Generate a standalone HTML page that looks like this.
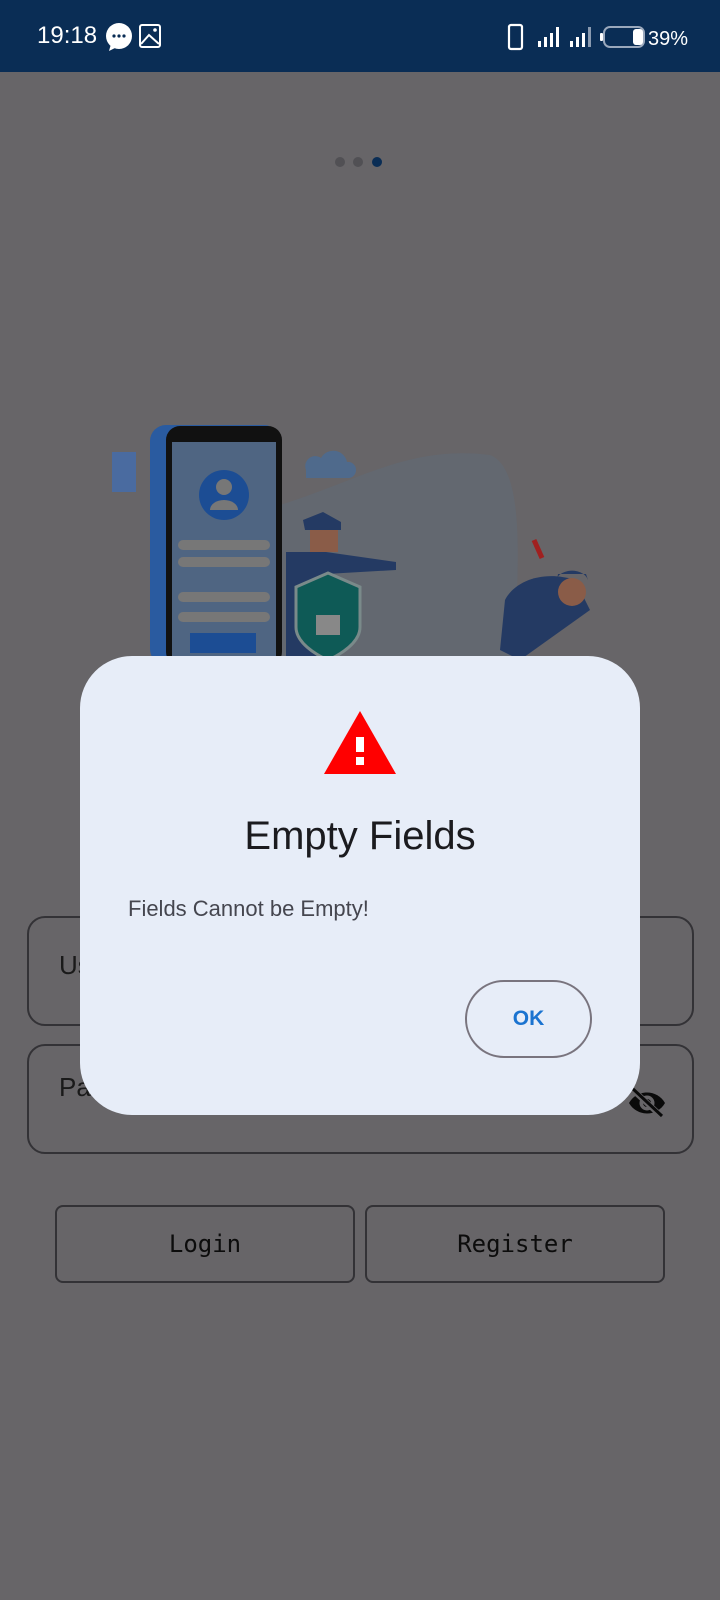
<!DOCTYPE html>
<html><head><meta charset="utf-8">
<style>
*{margin:0;padding:0;box-sizing:border-box}
body{width:720px;height:1600px;background:#676568;position:relative;overflow:hidden;font-family:"Liberation Sans",sans-serif}
.abs{position:absolute}
.sb{left:0;top:0;width:720px;height:72px;background:#0a2d55;color:#fff}
.field{border:2px solid #333236;border-radius:18px;left:27px;width:667px;height:110px}
.btn{border:2px solid #333236;border-radius:8px;height:78px;top:1205px;width:300px;font-family:"DejaVu Sans Mono","Liberation Mono",monospace;font-size:24px;color:#0c0c0c;display:flex;align-items:center;justify-content:center}
.dlg{left:80px;top:656px;width:560px;height:459px;background:#e7edf8;border-radius:52px}
</style></head><body>
<div class="abs sb">
  <div class="abs" style="left:37px;top:22px;font-size:24px;">19:18</div>
  <svg class="abs" style="left:105px;top:22px" width="58" height="30" viewBox="0 0 58 30">
    <circle cx="14" cy="14" r="13" fill="#fff"/><path d="M6 22 L4 29 L12 25Z" fill="#fff"/>
    <circle cx="9" cy="14" r="1.6" fill="#0a2d55"/><circle cx="14" cy="14" r="1.6" fill="#0a2d55"/><circle cx="19" cy="14" r="1.6" fill="#0a2d55"/>
    <rect x="35" y="3" width="20" height="22" rx="2" fill="none" stroke="#fff" stroke-width="2"/>
    <path d="M36 22 L44 13 L54 22" fill="none" stroke="#fff" stroke-width="2"/><circle cx="50" cy="8" r="1.8" fill="#fff"/>
  </svg>
  <svg class="abs" style="left:505px;top:22px" width="190" height="30" viewBox="0 0 190 30">
    <rect x="4" y="3" width="13" height="24" rx="2" fill="none" stroke="#fff" stroke-width="2.2"/>
    <rect x="33" y="19" width="3" height="6" fill="#fff"/><rect x="39" y="15" width="3" height="10" fill="#fff"/><rect x="45" y="11" width="3" height="14" fill="#fff"/><rect x="51" y="5" width="3" height="20" fill="#fff"/>
    <rect x="65" y="19" width="3" height="6" fill="#fff"/><rect x="71" y="15" width="3" height="10" fill="#fff"/><rect x="77" y="11" width="3" height="14" fill="#fff"/><rect x="83" y="5" width="3" height="20" fill="#8a9ab0"/>
    <rect x="99" y="5" width="40" height="20" rx="6" fill="none" stroke="#9aa8bc" stroke-width="2"/>
    <rect x="95" y="11" width="3" height="8" rx="1" fill="#fff"/>
    <rect x="128" y="7" width="10" height="16" rx="3" fill="#fff"/>
    <text x="143" y="23" fill="#fff" font-family="Liberation Sans" font-size="20">39%</text>
  </svg>
</div>
<div class="abs" style="left:335px;top:157px;width:10px;height:10px;border-radius:50%;background:#515054"></div>
<div class="abs" style="left:353px;top:157px;width:10px;height:10px;border-radius:50%;background:#515054"></div>
<div class="abs" style="left:372px;top:157px;width:10px;height:10px;border-radius:50%;background:#0a2d55"></div>

<svg class="abs" style="left:110px;top:330px" width="510" height="330" viewBox="0 0 510 330">
  <path d="M170 175 C250 150 300 115 380 125 C420 140 405 260 405 330 L170 330Z" fill="#636870"/>
  <path d="M196 140 a10 10 0 0 1 15-12 a14 14 0 0 1 26 4 a8 8 0 0 1 2 16 h-43z" fill="#4f6a8c"/>
  <rect x="2" y="122" width="24" height="40" fill="#4a6ba0"/>
  <rect x="40" y="95" width="130" height="240" rx="16" fill="#2a5ba0"/>
  <rect x="56" y="96" width="116" height="240" rx="14" fill="#111"/>
  <rect x="62" y="112" width="104" height="220" fill="#4f6582"/>
  <circle cx="114" cy="165" r="25" fill="#1c4d94"/><circle cx="114" cy="157" r="8" fill="#777"/><path d="M100 180 a14 10 0 0 1 28 0z" fill="#777"/>
  <rect x="68" y="210" width="92" height="10" rx="5" fill="#777"/><rect x="68" y="227" width="92" height="10" rx="5" fill="#777"/>
  <rect x="68" y="262" width="92" height="10" rx="5" fill="#777"/><rect x="68" y="282" width="92" height="10" rx="5" fill="#777"/>
  <rect x="80" y="303" width="66" height="20" fill="#1c4d94"/>
  <path d="M176 222 h40 l70 10 v8 l-70 4 v90 h-40z" fill="#243a63"/>
  <path d="M186 257 l32 -14 l32 14 v40 c0 20 -32 33 -32 33 c0 0 -32 -13 -32 -33z" fill="#0e5a56" stroke="#7a8a8a" stroke-width="3"/>
  <rect x="206" y="285" width="24" height="20" fill="#888"/>
  <path d="M195 200 h36 v-8 l-18 -10 l-20 8z" fill="#243a63"/><rect x="200" y="200" width="28" height="22" fill="#8a5c48"/>
  <path d="M424 210 l8 18" stroke="#a02020" stroke-width="5"/>
  <path d="M395 270 c10 -20 40 -30 70 -20 l15 30 l-70 50 l-20 -10z" fill="#243a63"/>
  <circle cx="462" cy="262" r="14" fill="#8a5c48"/><path d="M446 256 a16 12 0 0 1 32 -6 l-2 -6 h-28z" fill="#243a63"/>
</svg>

<div class="abs field" style="top:916px"><div class="abs" style="left:30px;top:32px;font-size:26px;color:#1a1a1a">Us</div></div>
<div class="abs field" style="top:1044px"><div class="abs" style="left:30px;top:26px;font-size:26px;color:#1a1a1a">Pas</div></div>
<svg class="abs" style="left:627px;top:1086px" width="40" height="32" viewBox="0 0 40 32">
  <path d="M2 17 C10 3 30 3 38 17 C30 31 10 31 2 17Z" fill="#0a0a0a"/><circle cx="20" cy="17" r="7.5" fill="#676568"/><circle cx="20" cy="17" r="4" fill="#0a0a0a"/>
  <path d="M5 3 L35 31" stroke="#676568" stroke-width="6"/><path d="M5 2 L35 30" stroke="#0a0a0a" stroke-width="3"/>
</svg>
<div class="abs btn" style="left:55px">Login</div>
<div class="abs btn" style="left:365px">Register</div>

<div class="abs dlg">
  <svg class="abs" style="left:244px;top:55px" width="72" height="64" viewBox="0 0 72 64">
    <path d="M36 0 L72 63 L0 63Z" fill="#ff0000"/><rect x="32" y="26" width="8" height="15" fill="#fff"/><rect x="32" y="46" width="8" height="8" fill="#fff"/>
  </svg>
  <div class="abs" style="left:0;width:560px;top:158px;text-align:center;font-size:40px;color:#1b1b1f">Empty Fields</div>
  <div class="abs" style="left:48px;top:240px;font-size:22px;color:#45464f">Fields Cannot be Empty!</div>
  <div class="abs" style="left:385px;top:324px;width:127px;height:78px;border:2px solid #79747e;border-radius:39px;display:flex;align-items:center;justify-content:center;color:#1a73d0;font-size:21px;font-weight:bold">OK</div>
</div>
</body></html>
